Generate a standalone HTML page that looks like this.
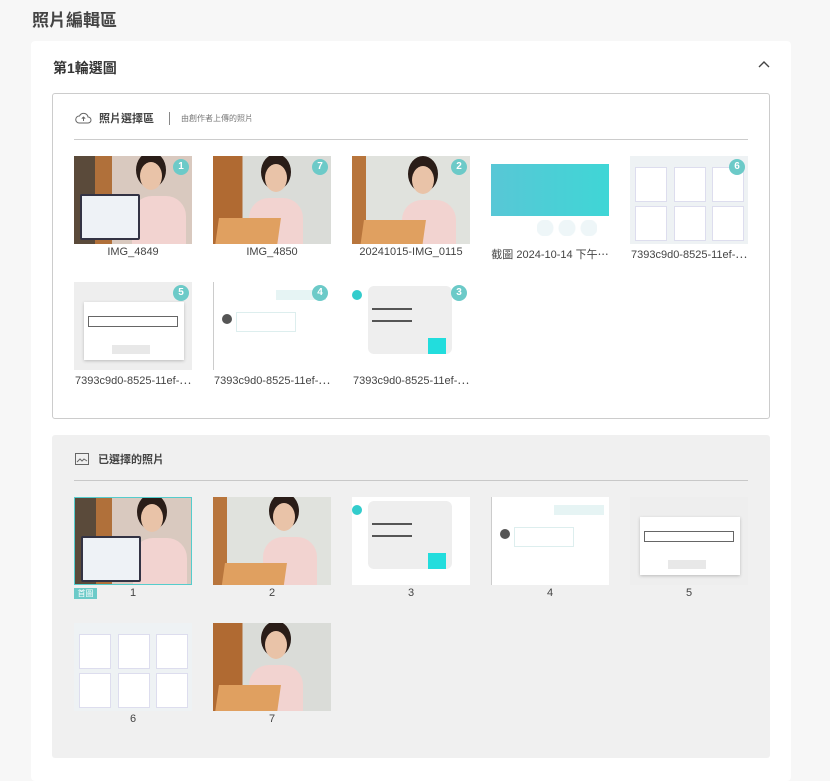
<!DOCTYPE html>
<html><head><meta charset="utf-8"><style>
*{box-sizing:border-box;margin:0;padding:0}
body{width:830px;height:770px;overflow:hidden;background:#f7f7f7;font-family:"Liberation Sans","Noto Sans CJK TC",sans-serif;color:#333;position:relative}
.a{position:absolute}
.t{width:118px;height:88px;position:absolute;overflow:hidden}
.lb{position:absolute;width:118px;text-align:center;font-size:11px;color:#444;white-space:nowrap}
.bd{position:absolute;right:3px;top:3px;width:16px;height:16px;border-radius:50%;background:#6ccac8;color:#fff;font-size:10px;font-weight:bold;text-align:center;line-height:16px}
.p1{background:linear-gradient(90deg,#5a4a3a 0 18%,#b0703a 18% 32%,#d9c9bf 32% 100%)}
.p1 .lap{position:absolute;left:6px;top:38px;width:60px;height:46px;background:#eef2f6;border:2px solid #334;border-radius:2px}
.p2{background:linear-gradient(90deg,#b06a32 0 25%,#dadcd8 25% 100%)}
.p3{background:linear-gradient(90deg,#b8753c 0 12%,#e0e2dd 12% 100%)}
.face{position:absolute;width:22px;height:28px;border-radius:50%;background:#e9c3a8;box-shadow:0 -6px 0 4px #2a1d18}
.body{position:absolute;width:54px;height:48px;border-radius:20px 20px 0 0;background:#f2d3d0}
.gold{position:absolute;width:62px;height:28px;background:#e0a060;transform:skewX(-8deg)}
.web{background:#fff}
.web .b{position:absolute;left:0;top:8px;width:118px;height:52px;background:linear-gradient(90deg,#58c7d6,#3fd6d6)}
.grid{background:#eef2f4}
.grid i{position:absolute;width:32px;height:35px;background:#fff;border:1px solid #dde}
.dlg{background:#eee}
.chat{background:#fff;border-left:1px solid #ccc}
.card{background:#fff}
.card .c{position:absolute;left:16px;top:4px;width:84px;height:68px;background:#eee;border-radius:6px}
.card .bar{position:absolute;height:2px;background:#555}
</style></head><body>
<div class="a" style="left:32px;top:6px;font-size:17px;font-weight:bold;color:#444">照片編輯區</div>
<div class="a" style="left:31px;top:41px;width:760px;height:740px;background:#fff;border-radius:4px"></div>
<div class="a" style="left:53px;top:58px;font-size:14px;font-weight:bold;color:#333">第1輪選圖</div>
<svg class="a" style="left:757px;top:59px" width="14" height="10" viewBox="0 0 14 10"><path d="M2 8L7 3L12 8" fill="none" stroke="#444" stroke-width="1.4"/></svg>

<div class="a" style="left:52px;top:93px;width:718px;height:326px;border:1px solid #ccc;border-radius:3px"></div>
<svg class="a" style="left:75px;top:112px" width="17" height="12" viewBox="0 0 17 12"><path d="M4 11H13a3 3 0 0 0 0-6 4.5 4.5 0 0 0-8.5-1A3.5 3.5 0 0 0 4 11z M8.5 9V5 M6.8 6.6L8.5 5 10.2 6.6" fill="none" stroke="#666" stroke-width="1"/></svg>
<div class="a" style="left:99px;top:110px;font-size:11px;font-weight:bold;color:#444">照片選擇區</div>
<div class="a" style="left:169px;top:112px;width:1px;height:13px;background:#888"></div>
<div class="a" style="left:181px;top:113px;font-size:8px;color:#777">由創作者上傳的照片</div>
<div class="a" style="left:74px;top:139px;width:674px;height:1px;background:#ccc"></div>

<!-- row1 -->
<div class="t p1" style="left:74px;top:156px"><div class="face" style="left:66px;top:6px"></div><div class="body" style="left:58px;top:40px"></div><div class="lap"></div><div class="bd">1</div></div>
<div class="lb" style="left:74px;top:246px">IMG_4849</div>
<div class="t p2" style="left:213px;top:156px"><div class="face" style="left:52px;top:8px"></div><div class="body" style="left:36px;top:42px"></div><div class="gold" style="left:4px;top:62px"></div><div class="bd">7</div></div>
<div class="lb" style="left:213px;top:246px">IMG_4850</div>
<div class="t p3" style="left:352px;top:156px"><div class="face" style="left:60px;top:10px"></div><div class="body" style="left:50px;top:44px"></div><div class="gold" style="left:10px;top:64px"></div><div class="bd">2</div></div>
<div class="lb" style="left:352px;top:246px">20241015-IMG_0115</div>
<div class="t web" style="left:491px;top:156px"><div class="b"></div><div class="a" style="left:46px;top:64px;width:60px;height:16px;background:radial-gradient(circle at 8px 8px,#eef6f8 8px,transparent 9px),radial-gradient(circle at 30px 8px,#eef6f8 8px,transparent 9px),radial-gradient(circle at 52px 8px,#eef6f8 8px,transparent 9px)"></div></div>
<div class="lb" style="left:491px;top:246px">截圖 2024-10-14 下午⋯</div>
<div class="t grid" style="left:630px;top:156px"><i style="left:5px;top:11px"></i><i style="left:44px;top:11px"></i><i style="left:82px;top:11px"></i><i style="left:5px;top:50px"></i><i style="left:44px;top:50px"></i><i style="left:82px;top:50px"></i><div class="bd">6</div></div>
<div class="lb" style="left:630px;top:246px">7393c9d0-8525-11ef-⋯</div>
<!-- row2 -->
<div class="t dlg" style="left:74px;top:282px"><div class="a" style="left:10px;top:20px;width:100px;height:58px;background:#fff;box-shadow:0 1px 3px #bbb"></div><div class="a" style="left:14px;top:34px;width:90px;height:11px;border:1px solid #666"></div><div class="a" style="left:38px;top:63px;width:38px;height:9px;background:#e8e8e8"></div><div class="bd">5</div></div>
<div class="lb" style="left:74px;top:372px">7393c9d0-8525-11ef-⋯</div>
<div class="t chat" style="left:213px;top:282px"><div class="a" style="left:8px;top:32px;width:10px;height:10px;border-radius:50%;background:#555"></div><div class="a" style="left:22px;top:30px;width:60px;height:20px;border:1px solid #dee"></div><div class="a" style="left:62px;top:8px;width:50px;height:10px;background:#e6f4f4"></div><div class="bd">4</div></div>
<div class="lb" style="left:213px;top:372px">7393c9d0-8525-11ef-⋯</div>
<div class="t card" style="left:352px;top:282px"><div class="c"></div><div class="a" style="left:0;top:8px;width:10px;height:10px;border-radius:50%;background:#3cc"></div><div class="a" style="left:76px;top:56px;width:18px;height:16px;background:#2dd"></div><div class="bar" style="left:20px;top:26px;width:40px"></div><div class="bar" style="left:20px;top:38px;width:40px"></div><div class="bd">3</div></div>
<div class="lb" style="left:352px;top:372px">7393c9d0-8525-11ef-⋯</div>

<!-- selected -->
<div class="a" style="left:52px;top:435px;width:718px;height:323px;background:#f0f0f0;border-radius:3px"></div>
<svg class="a" style="left:75px;top:453px" width="14" height="12" viewBox="0 0 14 12"><rect x="0.5" y="0.5" width="13" height="11" fill="none" stroke="#666"/><path d="M2 9L5 6 7 8 9 6 12 8" fill="none" stroke="#666"/></svg>
<div class="a" style="left:98px;top:451px;font-size:11px;font-weight:bold;color:#444">已選擇的照片</div>
<div class="a" style="left:74px;top:480px;width:674px;height:1px;background:#c8c8c8"></div>

<div class="t p1" style="left:74px;top:497px;border:1px solid #5cc"><div class="face" style="left:66px;top:6px"></div><div class="body" style="left:58px;top:40px"></div><div class="lap"></div></div>
<div class="a" style="left:74px;top:588px;width:23px;height:11px;background:#6ccac8;color:#fff;font-size:8px;text-align:center;line-height:11px">首圖</div>
<div class="lb" style="left:74px;top:587px">1</div>
<div class="t p3" style="left:213px;top:497px"><div class="face" style="left:60px;top:6px"></div><div class="body" style="left:50px;top:40px"></div><div class="gold" style="left:10px;top:66px"></div></div>
<div class="lb" style="left:213px;top:587px">2</div>
<div class="t card" style="left:352px;top:497px"><div class="c"></div><div class="a" style="left:0;top:8px;width:10px;height:10px;border-radius:50%;background:#3cc"></div><div class="a" style="left:76px;top:56px;width:18px;height:16px;background:#2dd"></div><div class="bar" style="left:20px;top:26px;width:40px"></div><div class="bar" style="left:20px;top:38px;width:40px"></div></div>
<div class="lb" style="left:352px;top:587px">3</div>
<div class="t chat" style="left:491px;top:497px"><div class="a" style="left:8px;top:32px;width:10px;height:10px;border-radius:50%;background:#555"></div><div class="a" style="left:22px;top:30px;width:60px;height:20px;border:1px solid #dee"></div><div class="a" style="left:62px;top:8px;width:50px;height:10px;background:#e6f4f4"></div></div>
<div class="lb" style="left:491px;top:587px">4</div>
<div class="t dlg" style="left:630px;top:497px"><div class="a" style="left:10px;top:20px;width:100px;height:58px;background:#fff;box-shadow:0 1px 3px #bbb"></div><div class="a" style="left:14px;top:34px;width:90px;height:11px;border:1px solid #666"></div><div class="a" style="left:38px;top:63px;width:38px;height:9px;background:#e8e8e8"></div></div>
<div class="lb" style="left:630px;top:587px">5</div>
<div class="t grid" style="left:74px;top:623px"><i style="left:5px;top:11px"></i><i style="left:44px;top:11px"></i><i style="left:82px;top:11px"></i><i style="left:5px;top:50px"></i><i style="left:44px;top:50px"></i><i style="left:82px;top:50px"></i></div>
<div class="lb" style="left:74px;top:713px">6</div>
<div class="t p2" style="left:213px;top:623px"><div class="face" style="left:52px;top:8px"></div><div class="body" style="left:36px;top:42px"></div><div class="gold" style="left:4px;top:62px"></div></div>
<div class="lb" style="left:213px;top:713px">7</div>
</body></html>
